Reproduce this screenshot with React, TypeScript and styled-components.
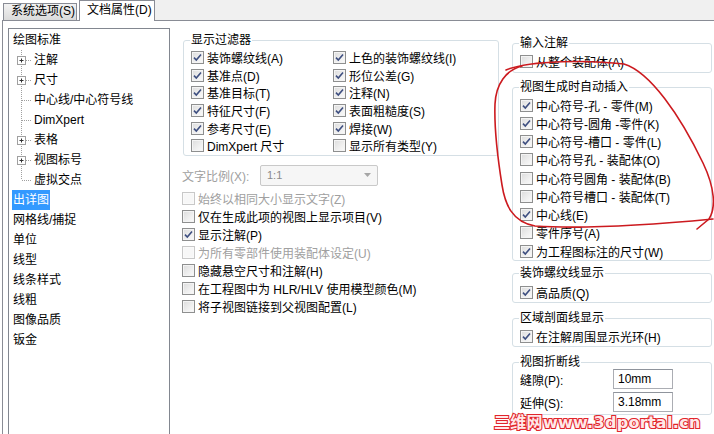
import React from "react";
import styled, { createGlobalStyle } from "styled-components";

const GlobalStyle = createGlobalStyle`
  html, body {
    margin: 0;
    padding: 0;
    background: #fff;
  }
  body {
    font-family: "Liberation Sans", "Noto Sans CJK SC", sans-serif;
    font-size: 12px;
    color: #000;
  }
`;

const Window = styled.div`
  position: relative;
  width: 714px;
  height: 434px;
  overflow: hidden;
  background: #fff;
`;

const TabStrip = styled.div`
  display: flex;
  align-items: flex-end;
  height: 20px;
  padding-left: 3px;
`;

const Tab = styled.div<{ $active?: boolean }>`
  box-sizing: border-box;
  position: relative;
  z-index: 1;
  width: ${(p) => (p.$active ? 76 : 74)}px;
  height: ${(p) => (p.$active ? 21 : 17)}px;
  margin-left: ${(p) => (p.$active ? 2 : 0)}px;
  margin-bottom: ${(p) => (p.$active ? -1 : 0)}px;
  padding-left: 7px;
  border: 1px solid #898c95;
  border-bottom: none;
  line-height: ${(p) => (p.$active ? 18 : 15)}px;
  white-space: nowrap;
  background: ${(p) =>
    p.$active ? "#fff" : "linear-gradient(#f2f2f2, #dadada)"};
`;

const TabFiller = styled.div`
  flex: 1;
  align-self: stretch;
  background: #f0f0f0;
`;

const Page = styled.div`
  display: flex;
  margin-left: 2px;
  padding: 7px 0 0 5px;
  border-top: 1px solid #898c95;
  border-left: 1px solid #898c95;
  height: 420px;
`;

const Tree = styled.div`
  box-sizing: border-box;
  flex: none;
  width: 162px;
  height: 430px;
  padding-top: 1px;
  border: 1px solid #828790;
`;

const TreeRow = styled.div<{ $child?: boolean }>`
  display: flex;
  align-items: center;
  height: 20px;
  padding-left: ${(p) => (p.$child ? 0 : 3)}px;
  white-space: nowrap;
`;

const TreeLabel = styled.span<{ $selected?: boolean }>`
  padding: 0 1px;
  line-height: 20px;
  color: ${(p) => (p.$selected ? "#fff" : "#000")};
  background: ${(p) => (p.$selected ? "#3399ff" : "transparent")};
`;

const Connector = ({ expand, last }: { expand?: boolean; last?: boolean }) => (
  <svg width="24" height="20" viewBox="0 0 24 20" style={{ flex: "none" }}>
    <g stroke="#a0a0a0" strokeWidth="1" strokeDasharray="1 1">
      <line x1="12.5" y1="0" x2="12.5" y2={last ? 10 : 20} />
      <line x1="13" y1="10.5" x2="23" y2="10.5" />
    </g>
    {expand && (
      <g>
        <rect x="8.5" y="6.5" width="8" height="8" fill="#fff" stroke="#a0a0a0" />
        <line x1="10.5" y1="10.5" x2="14.5" y2="10.5" stroke="#333" />
        <line x1="12.5" y1="8.5" x2="12.5" y2="12.5" stroke="#333" />
      </g>
    )}
  </svg>
);

const Column = styled.div<{ $width: number }>`
  display: flex;
  flex-direction: column;
  flex: none;
  width: ${(p) => p.$width}px;
  margin-left: 12px;
`;

const Group = styled.fieldset<{ $mt: number; $pb?: number; $width: number }>`
  box-sizing: border-box;
  width: ${(p) => p.$width}px;
  margin: ${(p) => p.$mt}px 0 0 ${(p) => (p.$width < 250 ? 0 : 1)}px;
  padding: 0 0 ${(p) => p.$pb ?? 0}px 7px;
  border: 1px solid #d5dfe5;
  border-radius: 3px;
  min-width: 0;
`;

const Legend = styled.legend`
  margin-left: -1px;
  padding: 0 1px;
  line-height: 16px;
  white-space: nowrap;
`;

const CheckGrid = styled.div<{ $cols?: string; $rowH: number; $mt?: number }>`
  display: grid;
  grid-template-columns: ${(p) => p.$cols ?? "1fr"};
  grid-auto-rows: ${(p) => p.$rowH}px;
  margin-top: ${(p) => p.$mt ?? 1}px;
`;

const CheckRow = styled.div<{ $disabled?: boolean }>`
  display: flex;
  align-items: center;
  gap: 3px;
  white-space: nowrap;
  color: ${(p) => (p.$disabled ? "#a0a0a0" : "#000")};
`;

const Box = styled.span<{ $disabled?: boolean }>`
  box-sizing: border-box;
  display: flex;
  flex: none;
  width: 13px;
  height: 13px;
  border: 1px solid ${(p) => (p.$disabled ? "#c8c8c8" : "#8e8f8f")};
  background: ${(p) =>
    p.$disabled
      ? "#f7f7f7"
      : "linear-gradient(135deg, #dcdcdc 0%, #eeeeee 55%, #fbfbfb 100%)"};
  box-shadow: inset 0 0 0 1px ${(p) => (p.$disabled ? "#fafafa" : "#f4f4f4")};
`;

const Check = ({
  label,
  checked,
  disabled,
}: {
  label: string;
  checked?: boolean;
  disabled?: boolean;
}) => (
  <CheckRow $disabled={disabled}>
    <Box $disabled={disabled}>
      {checked && (
        <svg width="11" height="11" viewBox="0 0 11 11">
          <path
            d="M2 5.6 L4.3 8 L9 2.4"
            fill="none"
            stroke="#3e4f80"
            strokeWidth="1.6"
          />
        </svg>
      )}
    </Box>
    <span>{label}</span>
  </CheckRow>
);

const ScaleRow = styled.div`
  display: flex;
  align-items: center;
  height: 21px;
  margin-top: 9px;
  color: #a0a0a0;
`;

const ScaleLabel = styled.span`
  width: 78px;
  white-space: nowrap;
`;

const Select = styled.div`
  box-sizing: border-box;
  display: flex;
  align-items: center;
  justify-content: space-between;
  width: 118px;
  height: 21px;
  padding: 0 6px 0 6px;
  border: 1px solid #c9c9c9;
  border-radius: 2px;
  background: #f6f6f6;
  color: #8a8a8a;
  font-size: 11px;
`;

const FieldGrid = styled.div`
  display: grid;
  grid-template-columns: 93px 60px;
  grid-auto-rows: 22px;
  row-gap: 1px;
  align-items: center;
  margin-top: -2px;
`;

const TextBox = styled.div`
  box-sizing: border-box;
  height: 20px;
  padding-left: 4px;
  border: 1px solid #abadb3;
  border-top-color: #8f949c;
  line-height: 18px;
  background: #fff;
`;

const Watermark = styled.span`
  position: absolute;
  left: 494px;
  top: 409px;
  font-family: "DejaVu Sans", "Noto Sans CJK SC", sans-serif;
  font-weight: bold;
  font-size: 16px;
  letter-spacing: 0.3px;
  color: #ffe8e8;
  -webkit-text-stroke: 2.2px #e1252c;
  paint-order: stroke fill;
  white-space: nowrap;
`;

const Annotation = styled.svg`
  position: absolute;
  left: 0;
  top: 0;
  pointer-events: none;
`;

const treeChildren = [
  { label: "注解", expand: true },
  { label: "尺寸", expand: true },
  { label: "中心线/中心符号线" },
  { label: "DimXpert" },
  { label: "表格", expand: true },
  { label: "视图标号", expand: true },
  { label: "虚拟交点", last: true },
];

const treeRoots = [
  "网格线/捕捉",
  "单位",
  "线型",
  "线条样式",
  "线粗",
  "图像品质",
  "钣金",
];

const filters: [string, boolean][] = [
  ["装饰螺纹线(A)", true],
  ["上色的装饰螺纹线(I)", true],
  ["基准点(D)", true],
  ["形位公差(G)", true],
  ["基准目标(T)", true],
  ["注释(N)", true],
  ["特征尺寸(F)", true],
  ["表面粗糙度(S)", true],
  ["参考尺寸(E)", true],
  ["焊接(W)", true],
  ["DimXpert 尺寸", false],
  ["显示所有类型(Y)", false],
];

const options: { label: string; checked?: boolean; disabled?: boolean }[] = [
  { label: "始终以相同大小显示文字(Z)", disabled: true },
  { label: "仅在生成此项的视图上显示项目(V)" },
  { label: "显示注解(P)", checked: true },
  { label: "为所有零部件使用装配体设定(U)", disabled: true },
  { label: "隐藏悬空尺寸和注解(H)" },
  { label: "在工程图中为 HLR/HLV 使用模型颜色(M)" },
  { label: "将子视图链接到父视图配置(L)" },
];

const autoInsert: [string, boolean][] = [
  ["中心符号-孔 - 零件(M)", true],
  ["中心符号-圆角  -零件(K)", true],
  ["中心符号-槽口 - 零件(L)", true],
  ["中心符号孔 - 装配体(O)", false],
  ["中心符号圆角 - 装配体(B)", false],
  ["中心符号槽口 - 装配体(T)", false],
  ["中心线(E)", true],
  ["零件序号(A)", false],
  ["为工程图标注的尺寸(W)", true],
];

export default function App() {
  return (
    <Window>
      <GlobalStyle />
      <TabStrip>
        <Tab>系统选项(S)</Tab>
        <Tab $active>文档属性(D)</Tab>
        <TabFiller />
      </TabStrip>
      <Page>
        <Tree>
          <TreeRow>
            <TreeLabel>绘图标准</TreeLabel>
          </TreeRow>
          {treeChildren.map((c) => (
            <TreeRow $child key={c.label}>
              <Connector expand={c.expand} last={c.last} />
              <TreeLabel>{c.label}</TreeLabel>
            </TreeRow>
          ))}
          <TreeRow>
            <TreeLabel $selected>出详图</TreeLabel>
          </TreeRow>
          {treeRoots.map((r) => (
            <TreeRow key={r}>
              <TreeLabel>{r}</TreeLabel>
            </TreeRow>
          ))}
        </Tree>

        <Column $width={318}>
          <Group $mt={4} $width={316}>
            <Legend>显示过滤器</Legend>
            <CheckGrid $cols="142px 1fr" $rowH={17.6}>
              {filters.map(([l, c]) => (
                <Check key={l} label={l} checked={c} />
              ))}
            </CheckGrid>
          </Group>
          <ScaleRow>
            <ScaleLabel>文字比例(X):</ScaleLabel>
            <Select>
              <span>1:1</span>
              <svg width="7" height="4" viewBox="0 0 7 4">
                <path d="M0 0 L7 0 L3.5 4 Z" fill="#a6a6a6" />
              </svg>
            </Select>
          </ScaleRow>
          <CheckGrid $rowH={18} $mt={4}>
            {options.map((o) => (
              <Check key={o.label} {...o} />
            ))}
          </CheckGrid>
        </Column>

        <Column $width={200}>
          <Group $mt={7} $pb={2} $width={200}>
            <Legend>输入注解</Legend>
            <CheckGrid $rowH={18}>
              <Check label="从整个装配体(A)" />
            </CheckGrid>
          </Group>
          <Group $mt={6} $width={200}>
            <Legend>视图生成时自动插入</Legend>
            <CheckGrid $rowH={18.25}>
              {autoInsert.map(([l, c]) => (
                <Check key={l} label={l} checked={c} />
              ))}
            </CheckGrid>
          </Group>
          <Group $mt={4} $pb={1} $width={200}>
            <Legend>装饰螺纹线显示</Legend>
            <CheckGrid $rowH={18} $mt={2}>
              <Check label="高品质(Q)" checked />
            </CheckGrid>
          </Group>
          <Group $mt={7} $pb={1} $width={200}>
            <Legend>区域剖面线显示</Legend>
            <CheckGrid $rowH={18} $mt={1}>
              <Check label="在注解周围显示光环(H)" checked />
            </CheckGrid>
          </Group>
          <Group $mt={7} $pb={1} $width={200}>
            <Legend>视图折断线</Legend>
            <FieldGrid>
              <span>缝隙(P):</span>
              <TextBox>10mm</TextBox>
              <span>延伸(S):</span>
              <TextBox>3.18mm</TextBox>
            </FieldGrid>
          </Group>
        </Column>
      </Page>

      <Annotation width="714" height="434" viewBox="0 0 714 434">
        <g fill="none" stroke="#cc1a1f" strokeWidth="1.6" strokeLinecap="round">
          <path d="M522 66 C506 70 496 84 495 104 C494 130 498 160 502 185 C505 204 512 222 535 226 C580 229 650 225 713 219" />
          <path d="M506 70 C530 60 590 60 624 64 C650 72 680 115 703 163 C715 188 716 208 709 219 L697 229" />
        </g>
      </Annotation>
      <Watermark>三维网www.3dportal.cn</Watermark>
    </Window>
  );
}
